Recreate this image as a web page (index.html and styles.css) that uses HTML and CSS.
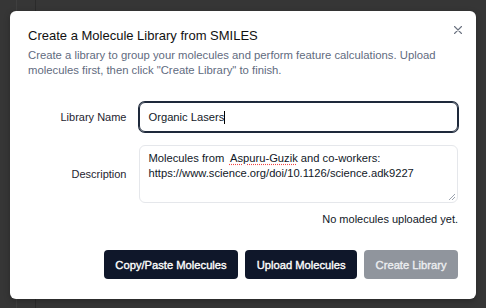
FILE: index.html
```html
<!DOCTYPE html>
<html lang="en">
<head>
    <meta charset="UTF-8">
    <meta name="viewport" content="width=device-width, initial-scale=1.0">
    <title>Create a Molecule Library</title>
    <link rel="stylesheet" href="styles.css">
</head>
<body>
    <div class="dialog">
        <button class="close-btn" aria-label="Close">
            <svg width="8" height="8" viewBox="0 0 8 8">
                <path d="M0.5 0.5 L7.5 7.5 M7.5 0.5 L0.5 7.5" stroke="#6b7280" stroke-width="1.1" stroke-linecap="round"/>
            </svg>
        </button>

        <div class="dialog-header">
            <h2>Create a Molecule Library from SMILES</h2>
            <p>Create a library to group your molecules and perform feature calculations. Upload molecules first, then click "Create Library" to finish.</p>
        </div>

        <div class="form-grid">
            <label class="form-label">Library Name</label>
            <div class="text-input focused">Organic Lasers<span class="caret"></span></div>

            <label class="form-label">Description</label>
            <div class="text-area">
                Molecules from&nbsp; <span class="misspelled">Aspuru-Guzik</span> and co-workers:<br>
                https://www.science.org/doi/10.1126/science.adk9227
                <svg class="grip" width="7" height="7" viewBox="0 0 7 7">
                    <path d="M1 7 L7 1 M4 7 L7 4" stroke="#9ca3af" stroke-width="1"/>
                </svg>
            </div>
        </div>

        <p class="upload-status">No molecules uploaded yet.</p>

        <div class="dialog-actions">
            <button class="btn">Copy/Paste Molecules</button>
            <button class="btn">Upload Molecules</button>
            <button class="btn" disabled>Create Library</button>
        </div>
    </div>
</body>
</html>
```

FILE: styles.css
```css
body {
    margin: 0;
    padding: 11px 10px;
    background:
        linear-gradient(to right,
            transparent 16px, #3f3f3f 16px, #3f3f3f 17px, transparent 17px,
            transparent 35px, #2b2b2b 35px, #2b2b2b 36px, transparent 36px),
        #363636;
    font-family: 'Liberation Sans', Arial, sans-serif;
    color: #111827;
    height: 308px;
    box-sizing: border-box;
    overflow: hidden;
}

.dialog {
    position: relative;
    width: 466px;
    height: 288px;
    box-sizing: border-box;
    padding: 17px 18px 19px 18px;
    background: #ffffff;
    border-radius: 6px;
    box-shadow: 0 2px 6px rgba(0, 0, 0, 0.25);
}

.close-btn {
    position: absolute;
    top: 15px;
    right: 14px;
    padding: 0;
    background: none;
    border: none;
    cursor: pointer;
    line-height: 0;
}

.dialog-header h2 {
    margin: 0;
    font-size: 13px;
    font-weight: 400;
    line-height: 16px;
    color: #111111;
}

.dialog-header p {
    margin: 4px 0 0 0;
    font-size: 11.3px;
    line-height: 15px;
    color: #5f6b80;
}

.form-grid {
    display: grid;
    grid-template-columns: 1fr 1fr 1fr 1fr;
    column-gap: 12px;
    row-gap: 13px;
    align-items: center;
    margin-top: 24px;
}

.form-label {
    text-align: right;
    font-size: 11px;
    color: #1f2430;
}

.text-input,
.text-area {
    grid-column: span 3;
    box-sizing: border-box;
    font-size: 11.2px;
    color: #111827;
    border-radius: 6px;
}

.text-input {
    height: 30px;
    padding: 0 9px;
    display: flex;
    align-items: center;
}

.text-input.focused {
    border: 1px solid #1e293b;
    box-shadow: 0 0 0 1px #1e293b;
}

.caret {
    display: inline-block;
    width: 1px;
    height: 13px;
    background: #000;
}

.text-area {
    position: relative;
    height: 58px;
    padding: 5px 9px;
    line-height: 15px;
    border: 1px solid #e5e7eb;
}

.misspelled {
    text-decoration: underline dotted #ef4444;
    text-underline-offset: 2px;
}

.grip {
    position: absolute;
    right: 2px;
    bottom: 2px;
}

.upload-status {
    margin: 10px 0 0 0;
    text-align: right;
    font-size: 11px;
    line-height: 13px;
    color: #111827;
}

.dialog-actions {
    display: flex;
    justify-content: flex-end;
    gap: 7px;
    margin-top: 24px;
}

.btn {
    height: 29px;
    padding: 0 11.5px;
    background: #0f172a;
    color: #ffffff;
    border: none;
    border-radius: 4px;
    font-family: inherit;
    font-size: 11.2px;
    font-weight: 400;
    -webkit-text-stroke: 0.35px currentColor;
    cursor: pointer;
}

.btn:disabled {
    background: #90959d;
    color: #eceef1;
    cursor: default;
}
```
